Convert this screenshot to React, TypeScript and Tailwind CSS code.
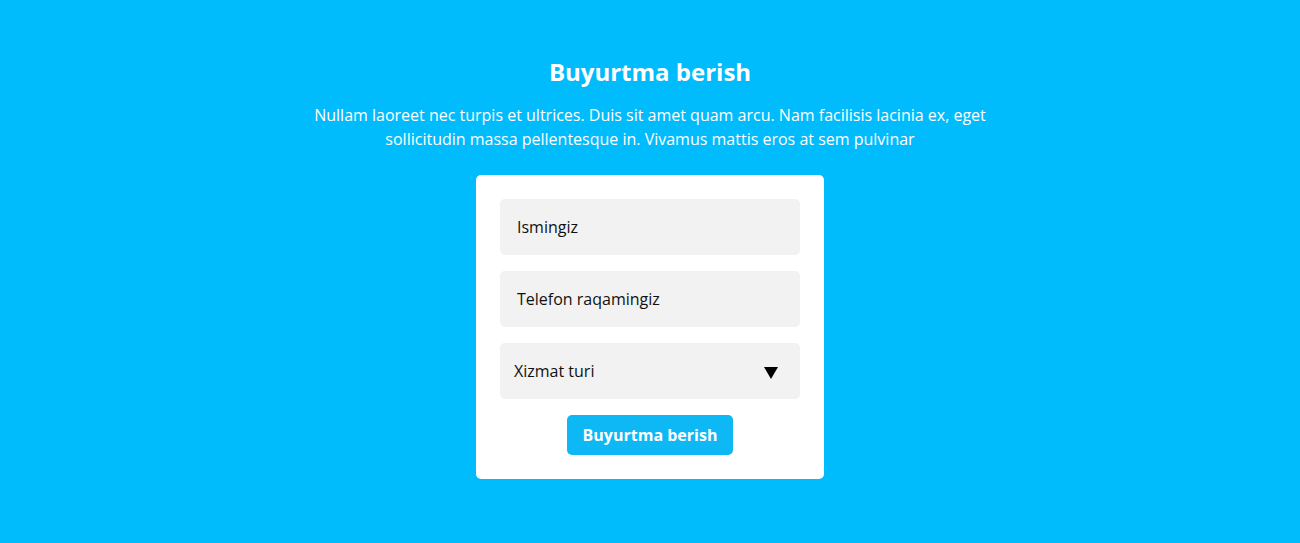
export default function App() {
  return (
    <div
      className="min-h-screen bg-[#00bcfd] pt-14 pb-16 flex flex-col items-center text-white"
      style={{ fontFamily: '"Open Sans", "Noto Sans", sans-serif' }}
    >
      {/* Heading */}
      <h1 className="text-[24px] leading-8 font-bold">Buyurtma berish</h1>
      <p className="mt-[15px] max-w-[690px] text-center text-[16px] leading-6">
        Nullam laoreet nec turpis et ultrices. Duis sit amet quam arcu. Nam
        facilisis lacinia ex, eget sollicitudin massa pellentesque in. Vivamus
        mattis eros at sem pulvinar
      </p>

      {/* Form card */}
      <form className="mt-6 w-[348px] bg-white rounded-[5px] p-6 flex flex-col gap-4">
        <input
          type="text"
          placeholder="Ismingiz"
          className="h-14 w-full rounded-[5px] bg-[#f2f2f2] px-[17px] text-[16px] text-[#111] placeholder:text-[#111] outline-none"
        />
        <input
          type="text"
          placeholder="Telefon raqamingiz"
          className="h-14 w-full rounded-[5px] bg-[#f2f2f2] px-[17px] text-[16px] text-[#111] placeholder:text-[#111] outline-none"
        />
        <div className="h-14 w-full rounded-[5px] bg-[#f2f2f2] pl-[14px] pr-[22px] flex items-center justify-between text-[16px] text-[#111]">
          <span>Xizmat turi</span>
          <svg width="14" height="12" viewBox="0 0 14 12" className="mt-[3px]">
            <path d="M0 0h14L7 12z" fill="#000" />
          </svg>
        </div>
        <button
          type="button"
          className="self-center h-10 px-4 rounded-[5px] bg-[#0db8f4] text-white font-bold text-[16px]"
        >
          Buyurtma berish
        </button>
      </form>
    </div>
  );
}
